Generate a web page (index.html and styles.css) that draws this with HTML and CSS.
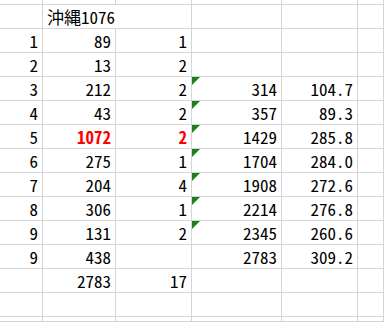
FILE: index.html
```html
<!DOCTYPE html>
<html lang="ja">
<head>
<meta charset="utf-8">
<link rel="stylesheet" href="styles.css">
</head>
<body>
<div class="sheet">
  <div class="c"></div><div class="c"></div><div class="c"></div><div class="c"></div><div class="c"></div><div class="c"></div>

  <div class="c"></div><div class="c l span2">沖縄1076</div><div class="c"></div><div class="c"></div><div class="c"></div>

  <div class="c">1</div><div class="c">89</div><div class="c">1</div><div class="c"></div><div class="c"></div><div class="c"></div>
  <div class="c">2</div><div class="c">13</div><div class="c">2</div><div class="c"></div><div class="c"></div><div class="c"></div>
  <div class="c">3</div><div class="c">212</div><div class="c">2</div><div class="c err">314</div><div class="c">104.7</div><div class="c"></div>
  <div class="c">4</div><div class="c">43</div><div class="c">2</div><div class="c err">357</div><div class="c">89.3</div><div class="c"></div>
  <div class="c">5</div><div class="c red">1072</div><div class="c red">2</div><div class="c err">1429</div><div class="c">285.8</div><div class="c"></div>
  <div class="c">6</div><div class="c">275</div><div class="c">1</div><div class="c err">1704</div><div class="c">284.0</div><div class="c"></div>
  <div class="c">7</div><div class="c">204</div><div class="c">4</div><div class="c err">1908</div><div class="c">272.6</div><div class="c"></div>
  <div class="c">8</div><div class="c">306</div><div class="c">1</div><div class="c err">2214</div><div class="c">276.8</div><div class="c"></div>
  <div class="c">9</div><div class="c">131</div><div class="c">2</div><div class="c err">2345</div><div class="c">260.6</div><div class="c"></div>
  <div class="c">9</div><div class="c">438</div><div class="c"></div><div class="c">2783</div><div class="c">309.2</div><div class="c"></div>
  <div class="c"></div><div class="c">2783</div><div class="c">17</div><div class="c"></div><div class="c"></div><div class="c"></div>
  <div class="c"></div><div class="c"></div><div class="c"></div><div class="c"></div><div class="c"></div><div class="c"></div>
  <div class="c"></div><div class="c"></div><div class="c"></div><div class="c"></div><div class="c"></div><div class="c"></div>
</div>
</body>
</html>
```
FILE: styles.css
```css
html, body {
  margin: 0;
  padding: 0;
  background: #ffffff;
  overflow: hidden;
  width: 384px;
  height: 322px;
}

.sheet {
  display: grid;
  grid-template-columns: 43px 73px 76px 90px 76px 1fr;
  grid-template-rows: 5px repeat(13, 24px) 5px;
  height: 322px;
  overflow: hidden;
  font-family: "Noto Sans CJK JP", "Noto Sans", sans-serif;
  font-size: 17px;
  font-feature-settings: "hwid" 1;
  color: #000000;
}

.c {
  position: relative;
  box-sizing: border-box;
  border-right: 1px solid #d4d4d4;
  border-bottom: 1px solid #d4d4d4;
  line-height: 23px;
  text-align: right;
  padding-right: 4px;
  white-space: nowrap;
  overflow: hidden;
}

.l {
  text-align: left;
  padding-left: 4px;
}

.span2 {
  grid-column: span 2;
}

.red {
  color: #ff0000;
  font-weight: bold;
}

.err::before {
  content: "";
  position: absolute;
  left: 0;
  top: 0;
  width: 8px;
  height: 8px;
  background: #1a7f1a;
  clip-path: polygon(0 0, 100% 0, 0 100%);
}
```
